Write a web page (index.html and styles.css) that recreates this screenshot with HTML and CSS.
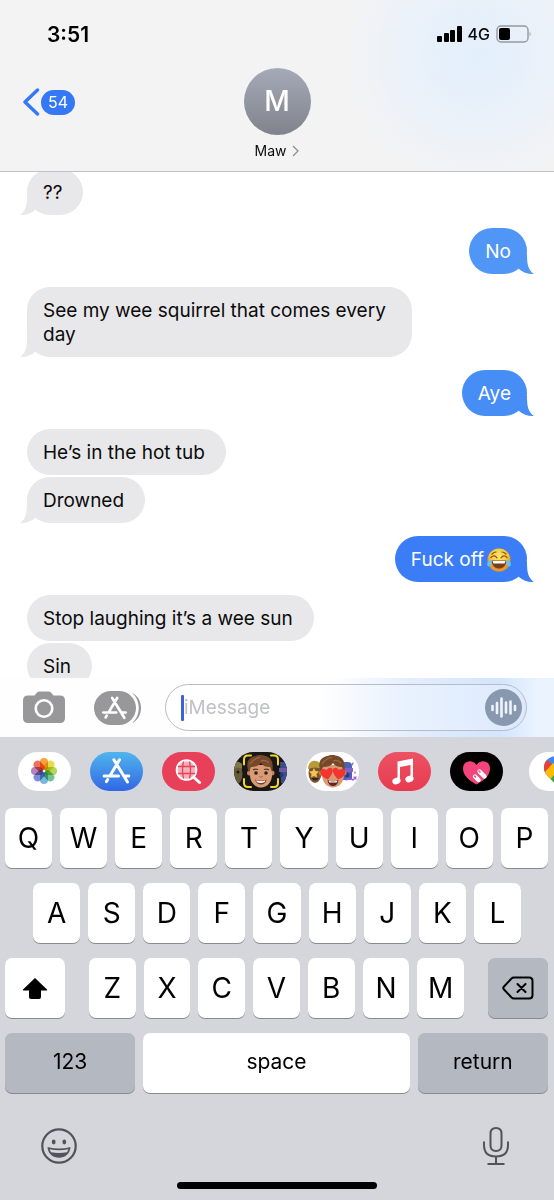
FILE: index.html
```html
<!doctype html>
<html lang="en">
<head>
<meta charset="utf-8">
<meta name="viewport" content="width=device-width, initial-scale=1">
<title>Maw</title>
<link rel="stylesheet" href="styles.css">
</head>
<body>

<!-- shared shapes -->

<svg class="defs" aria-hidden="true">
	<symbol id="store" viewBox="0 0 28 26">
		<path d="M17 1.8 7.6 17.6M5.2 21.6 4 23.6M11.4 1.8 25 24M1.5 18H16M21.4 18h5.1" fill="none" stroke="currentColor" stroke-width="3" stroke-linecap="round"/>
	</symbol>
</svg>


<!-- status bar and contact -->

<header>
	<div class="status">
		<span class="clock">3:51</span>
		<div class="signal">
			<svg width="25" height="16" viewBox="0 0 25 16" aria-label="Signal">
				<rect x="0" y="10" width="5" height="6" rx="1"/>
				<rect x="7" y="7" width="5" height="9" rx="1"/>
				<rect x="13" y="4" width="5" height="12" rx="1"/>
				<rect x="20" y="0" width="5" height="16" rx="1"/>
			</svg>
			<span>4G</span>
			<svg width="36" height="18" viewBox="0 0 36 18" aria-label="Battery">
				<rect x="1" y="1" width="31" height="16" rx="4" fill="none" stroke="#96999d" stroke-width="1.4"/>
				<rect x="3" y="3" width="11" height="12" rx="2"/>
				<path d="M33.600 6.500q2 2.500 0 5z" fill="#96999d"/>
			</svg>
		</div>
	</div>
	<div class="contact">
		<a class="back" href="#" aria-label="Back, 54 unread">
			<svg width="18" height="28" viewBox="0 0 18 28"><path d="M15.500 2 3 14l12.500 12" fill="none" stroke="currentColor" stroke-width="3.400" stroke-linecap="round" stroke-linejoin="round"/></svg>
			<span class="badge">54</span>
		</a>
		<a class="person" href="#">
			<span class="avatar">M</span>
			<span class="name">Maw
				<svg width="7" height="12" viewBox="0 0 7 12"><path d="m1 1 5 5-5 5" fill="none" stroke="#8a8a8e" stroke-width="1.200"/></svg>
			</span>
		</a>
	</div>
</header>


<!-- messages -->

<main>
	<div class="thread">
		<p class="bubble them last">??</p>
		<p class="bubble me last first-shade">No</p>
		<p class="bubble them last">See my wee squirrel that comes every day</p>
		<p class="bubble me last second-shade">Aye</p>
		<p class="bubble them">He’s in the hot tub</p>
		<p class="bubble them last">Drowned</p>
		<p class="bubble me last">Fuck off<svg class="emoji" viewBox="0 0 24 24" role="img" aria-label="😂">
			<defs><radialGradient id="joy" cy=".35"><stop offset="0" stop-color="#ffe768"/><stop offset=".7" stop-color="#fccb3c"/><stop offset="1" stop-color="#e69a2c"/></radialGradient></defs>
			<circle cx="12" cy="12" r="11.500" fill="url(#joy)"/>
			<path d="M4 9.500Q7 6 10 9.800M14 9.800Q17 6 20 9.500M5 6q2-2 4-2M15 4q2 0 4 2" fill="none" stroke="#8b531f" stroke-width="1.200" stroke-linecap="round"/>
			<path d="M4.500 12.500h15C19 18 16 20.500 12 20.500S5 18 4.500 12.500z" fill="#7c3b1d"/>
			<path d="M5.500 13h13l-1 2.600H6.500z" fill="#fff"/>
			<path d="M5 11.500C1.500 12.500-.5 15 .3 17.200c.8 1.800 3 1.600 3.700-.2.500-1.500.5-3.500 1-5.500zM19 11.500c3.500 1 5.500 3.500 4.700 5.700-.8 1.800-3 1.600-3.700-.2-.5-1.500-.5-3.500-1-5.500z" fill="#62c3f3"/>
		</svg></p>
		<p class="bubble them">Stop laughing it’s a wee sun</p>
		<p class="bubble them">Sin</p>
	</div>
</main>


<!-- message box -->

<form class="composer">
	<button type="button" class="camera" aria-label="Camera">
		<svg width="42" height="33" viewBox="0 0 42 33">
			<path d="M5 4.500h6.500L14 1.500Q15 .5 16.500.5h9q1.500 0 2.500 1l2.500 3H37q5 0 5 5V27q0 5-5 5H5q-5 0-5-5V9.500q0-5 5-5z" fill="#98989a"/>
			<circle cx="21" cy="17.500" r="8.300" fill="none" stroke="#fff" stroke-width="2.600"/>
		</svg>
	</button>
	<button type="button" class="apps" aria-label="Apps">
		<svg width="47" height="34" viewBox="0 0 47 34">
			<rect width="42" height="34" rx="17" fill="#98989a"/>
			<path d="M36 1.500C47 5 47 29 36 32.500" fill="none" stroke="#fff" stroke-width="2"/>
			<path d="M38 2C50 7 50 27 38 32 47 25 47 9 38 2z" fill="#98989a"/>
			<use href="#store" x="8" y="5" width="25" height="24" color="#fff"/>
		</svg>
	</button>
	<div class="field">
		<span class="caret"></span>
		<input type="text" placeholder="iMessage" aria-label="iMessage">
		<button type="button" class="audio" aria-label="Record audio">
			<svg width="37" height="37" viewBox="0 0 37 37">
				<circle cx="18.500" cy="18.500" r="18.500" fill="#8798af"/>
				<path d="M7.500 17v4M12 14v10M16.500 9.500v18M21 13.500v10M25.500 12.500v12M30 17v4" fill="none" stroke="#edf4fd" stroke-width="2.600" stroke-linecap="round"/>
			</svg>
		</button>
	</div>
</form>


<!-- keyboard -->

<section class="keyboard">
	<nav class="drawer">
		<button class="pill" aria-label="Photos">
			<svg viewBox="0 0 53 39">
				<g class="petals" transform="translate(26 19)">
					<rect x="-4" y="-13" width="8" height="12" rx="4" fill="#f8a23a"/>
					<rect x="-4" y="-13" width="8" height="12" rx="4" fill="#e8dc44" transform="rotate(45)"/>
					<rect x="-4" y="-13" width="8" height="12" rx="4" fill="#b6d35a" transform="rotate(90)"/>
					<rect x="-4" y="-13" width="8" height="12" rx="4" fill="#71c195" transform="rotate(135)"/>
					<rect x="-4" y="-13" width="8" height="12" rx="4" fill="#79b9dc" transform="rotate(180)"/>
					<rect x="-4" y="-13" width="8" height="12" rx="4" fill="#7b8fce" transform="rotate(225)"/>
					<rect x="-4" y="-13" width="8" height="12" rx="4" fill="#b783bd" transform="rotate(270)"/>
					<rect x="-4" y="-13" width="8" height="12" rx="4" fill="#ee705b" transform="rotate(315)"/>
				</g>
			</svg>
		</button>
		<button class="pill store" aria-label="App Store">
			<svg viewBox="0 0 53 39"><use href="#store" x="12.500" y="6" width="28" height="26"/></svg>
		</button>
		<button class="pill search" aria-label="Images">
			<svg viewBox="0 0 53 39">
				<circle cx="24.500" cy="18" r="9.800" fill="#f7b0ba" stroke="#fff" stroke-width="2"/>
				<path d="M21.500 9.500q-2 8.500 0 17M27.500 9.500q2 8.500 0 17M16 14.500h17M16 21.500h17" fill="none" stroke="#e94059" stroke-width="1.300"/>
				<path d="m32 25.500 5.500 5" stroke="#fff" stroke-width="3" stroke-linecap="round"/>
			</svg>
		</button>
		<button class="pill dark" aria-label="Memoji">
			<svg viewBox="0 0 53 39">
				<ellipse cx="3" cy="22" rx="5.500" ry="10" fill="#665a38"/>
				<path d="M0 17q4-3 8 0v-5q-4-4-8-1z" fill="#82764a"/>
				<circle cx="4" cy="20" r="1.500" fill="#201c15"/>
				<path d="M46 10h7v21h-6z" fill="#3d4c8e"/>
				<path d="M45 16h8v4h-8z" fill="#6c57a0"/>
				<circle cx="47.500" cy="23" r="2" fill="#223870"/>
				<g id="face">
					<circle cx="15.500" cy="21" r="2.500" fill="#c9825c"/>
					<circle cx="38" cy="21" r="2.500" fill="#c9825c"/>
					<path d="M16 13h22v10c0 7-5 12.500-11 12.500S16 30 16 23z" fill="#d99b74"/>
					<path d="M15 20C11.500 13 13 5 22 4c3-2 14-1 16 6 1 3 1 7 0 10l-2-5c-4 0-7-1-9-4-2 3-6 4-10 4z" fill="#75482b"/>
					<path d="M16 12q4-6 10-6.500m1 3.500q4-2 8 2" fill="none" stroke="#a36a42" stroke-width="1.200"/>
				</g>
				<path d="M19 18q2-1.500 5-.5M30 17.500q3-1 5 .5" fill="none" stroke="#5d341f" stroke-width="1.200"/>
				<circle cx="22" cy="21" r="1.800" fill="#2e2019"/><circle cx="32" cy="21" r="1.800" fill="#2e2019"/>
				<path d="M25.500 24.500q1.500 1.500 3 0" fill="none" stroke="#a66144"/>
				<path d="M21 27.500q6 2.500 11.500 0-1 5-5.500 5t-6-5z" fill="#7c332a"/>
				<path d="M22 28.200q5 2 9.500 0l-1 2q-4 1.500-7.500 0z" fill="#fff"/>
				<path d="M17 3.500h-3q-4 0-4 4v5M37 3.500h3q4 0 4 4v5M10 27v4q0 4 4 4h3M44 27v4q0 4-4 4h-3" fill="none" stroke="#f5d52d" stroke-width="2" stroke-linecap="round"/>
			</svg>
		</button>
		<button class="pill" aria-label="Memoji stickers">
			<svg viewBox="0 0 53 39">
				<ellipse cx="9" cy="21" rx="6.500" ry="10" fill="#79572e"/>
				<path d="M2 17c0-11 13-11 14 0q-7-3-14 0z" fill="#b99b35"/>
				<path d="m8 16 1.500 3 3.500.5-2.500 2.500.5 3.500-3-1.500-3 1.500.5-3.500L3 19.500l3.500-.5z" fill="#f3c34a"/>
				<path d="M5 26h8q-4 5-8 0z" fill="#39221a"/>
				<path d="M35 14q0-4 4-4h3q4 0 4 4v14H36z" fill="#4d62b5"/>
				<path d="M35 16h12v4H35z" fill="#8362c8"/>
				<circle cx="41" cy="23" r="2.500" fill="#283d88"/>
				<path d="M40 28q5-2 7 0l3-3M46 13l1-2M49 20v1M48 25l2 2" fill="none" stroke="#9d5ce0" stroke-width="1.300" stroke-linecap="round"/>
				<use href="#face"/>
				<path d="M21.500 28q5.500 2.500 11 0-1 6-5.500 6t-5.500-6z" fill="#65251f"/>
				<path d="M22.500 28.800q4.500 1.500 9 0l-1 1.800h-7z" fill="#fff"/>
				<path d="M22 27.500C10 23 14 14 20.500 18c4-5 11-1 1.500 9.500z" fill="#f23531"/>
				<path d="M32 27.500C22 17 29 13 33 18c6-4 11 5-1 9.500z" fill="#f23531"/>
			</svg>
		</button>
		<button class="pill music" aria-label="Music">
			<svg viewBox="0 0 53 39">
				<path d="m19.500 9.500 15.500-3v6l-13 2.500v14h-2.500z" fill="#fff"/>
				<path d="M32.500 10H35v17h-2.500z" fill="#fff"/>
				<ellipse cx="18.500" cy="29" rx="4.200" ry="3.200" fill="#fff" transform="rotate(-20 18.500 29)"/>
				<ellipse cx="31.500" cy="27" rx="4.200" ry="3.200" fill="#fff" transform="rotate(-20 31.500 27)"/>
			</svg>
		</button>
		<button class="pill black" aria-label="Digital Touch">
			<svg viewBox="0 0 53 39">
				<path d="M26.500 32.500C20 29 13 24 13 16.500 13 8 23 7 26.500 13 30 7 40 8 40 16.500 40 24 33 29 26.500 32.500z" fill="#f2447d"/>
				<path d="m25 24.500 3.500 3.500M29.500 19.500l5 5" stroke="#fff" stroke-width="4.400" stroke-linecap="round"/>
				<path d="m24.500 24 1 1M29 19l1 1" stroke="#f2447d" stroke-width="1.500" stroke-linecap="round"/>
			</svg>
		</button>
		<span class="divider"></span>
		<button class="pill" aria-label="Google Maps">
			<svg viewBox="0 0 53 39">
				<clipPath id="pin"><path d="M28 4c-8 0-13 5-13 12 0 8 9 11 13 19 4-8 13-11 13-19 0-7-5-12-13-12z"/></clipPath>
				<g clip-path="url(#pin)">
					<path d="M15 4h26v31H15z" fill="#4285f4"/>
					<path d="m14 10 4-2 6 5-8 9h-3z" fill="#e94235"/>
					<path d="m15 21 9-10 9 9-10 12z" fill="#fbbc04"/>
					<path d="m20 29 14-17h8v13L28 36z" fill="#34a853"/>
				</g>
			</svg>
		</button>
	</nav>

	<div class="keys">
		<div class="row">
			<button>Q</button>
			<button>W</button>
			<button>E</button>
			<button>R</button>
			<button>T</button>
			<button>Y</button>
			<button>U</button>
			<button>I</button>
			<button>O</button>
			<button>P</button>
		</div>
		<div class="row inset">
			<button>A</button>
			<button>S</button>
			<button>D</button>
			<button>F</button>
			<button>G</button>
			<button>H</button>
			<button>J</button>
			<button>K</button>
			<button>L</button>
		</div>
		<div class="row outer">
			<button class="side" aria-label="Shift">
				<svg width="26" height="23" viewBox="0 0 26 23"><path d="M13 1 25 12.500q.5 1-.5 1H19V20q0 2-2 2H9q-2 0-2-2v-6.500H1.500q-1 0-.5-1z"/></svg>
			</button>
			<div class="row letters">
				<button>Z</button>
				<button>X</button>
				<button>C</button>
				<button>V</button>
				<button>B</button>
				<button>N</button>
				<button>M</button>
			</div>
			<button class="side grey" aria-label="Delete">
				<svg width="32" height="24" viewBox="0 0 32 24"><path d="M12 1.500h15q3.500 0 3.500 3.500v14q0 3.500-3.500 3.500H12q-1.500 0-2.500-1L2 13.500q-1.500-1.500 0-3l7.500-8q1-1 2.500-1zM15.500 8l8 8M23.500 8l-8 8" fill="none" stroke="#000" stroke-width="2" stroke-linecap="round" stroke-linejoin="round"/></svg>
			</button>
		</div>
		<div class="row words">
			<button class="grey">123</button>
			<button class="space">space</button>
			<button class="grey">return</button>
		</div>
	</div>

	<div class="tools">
		<button aria-label="Emoji">
			<svg width="36" height="36" viewBox="0 0 36 36">
				<circle cx="18" cy="18" r="16.700" fill="none" stroke="#50535a" stroke-width="2.200"/>
				<ellipse cx="12.700" cy="14" rx="1.900" ry="2.400" fill="#50535a"/>
				<ellipse cx="23.300" cy="14" rx="1.900" ry="2.400" fill="#50535a"/>
				<path d="M6.500 19q11.500 3 23 0C29 26 24 29.800 18 29.800S7 26 6.500 19z" fill="#50535a"/>
				<path d="M8.500 21.200q9.500 2 19 0l-1.500 3q-8 1.600-16 0z" fill="#d6d7dd"/>
			</svg>
		</button>
		<button aria-label="Dictate">
			<svg width="26" height="38" viewBox="0 0 26 38"><path d="M13 1q5.500 0 5.500 5.500v12q0 5.500-5.500 5.500t-5.500-5.500v-12Q7.500 1 13 1zM1 14.500V18q0 11.500 12 11.500T25 18v-3.500M13 29.500V37M4.500 37h17" fill="none" stroke="#50535a" stroke-width="2"/></svg>
		</button>
	</div>
	<div class="home"></div>
</section>

</body>
</html>
```
FILE: styles.css
```css
/* ====  Base  ==== */

* {
	box-sizing: border-box;
}

html, body {
	height: 100%;
	margin: 0;
}

body {
	display: flex;
	flex-direction: column;
	overflow: hidden;
	font-family: Inter, "Liberation Sans", sans-serif;
	color: #0b0b0c;
	background: white;
}

button {
	display: flex;
	align-items: center;
	justify-content: center;
	padding: 0;
	border: 0;
	background: none;
	font: inherit;
	color: black;
}

a {
	color: inherit;
	text-decoration: none;
}

svg {
	display: block;
	flex: none;
}

.defs {
	position: absolute;
	width: 0;
	height: 0;
}


/* ====  Header  ==== */

header {
	flex: none;
	z-index: 1;
	border-bottom: 1px solid #c0c0c3;
	background: radial-gradient(circle at 86% 32%, #e2effc 0, #e9f1fa 60px, #f3f3f4 130px);
}

.status {
	display: flex;
	justify-content: space-between;
	align-items: center;
	height: 68px;
	padding: 0 22px 0 47px;
}

.clock {
	font-size: 21px;
	font-weight: 600;
	color: black;
}

.signal {
	display: flex;
	align-items: center;
	gap: 6px;
	font-size: 16px;
	font-weight: 500;
}

.contact {
	display: grid;
	grid-template-columns: 1fr auto 1fr;
	align-items: start;
	padding: 0 22px 10px;
}

.back {
	display: flex;
	align-items: center;
	height: 68px;
	gap: 1px;
	color: #3578f6;
}

.badge {
	padding: 0 7px;
	border-radius: 13px;
	background: #3578f6;
	color: white;
	font-size: 16px;
	line-height: 25px;
}

.person {
	display: flex;
	flex-direction: column;
	align-items: center;
	gap: 5px;
}

.avatar {
	width: 67px;
	height: 67px;
	border-radius: 50%;
	background: linear-gradient(#a5aab7, #80838c);
	color: white;
	font-size: 28px;
	font-weight: 500;
	line-height: 67px;
	text-align: center;
}

.name {
	display: flex;
	align-items: center;
	gap: 6px;
	font-size: 14px;
	line-height: 21px;
}


/* ====  Messages  ==== */

main {
	flex: 1;
	min-height: 0;
	overflow: hidden;
}

.thread {
	display: flex;
	flex-direction: column;
	align-items: flex-start;
	gap: 2px;
	margin-top: -3px; /* scrolled a little under the header */
	padding: 0 27px;
}

.bubble {
	position: relative;
	max-width: 385px;
	margin: 0;
	padding: 12px 16px 10px;
	border-radius: 23px;
	font-size: 19px;
	line-height: 24px;
}

.last {
	margin-bottom: 11px;
}

.them {
	padding-right: 21px;
	background: #e8e8ea;
}

.me {
	align-self: flex-end;
	background: #3a7df6;
	color: white;
}

.first-shade {
	background: #5096f6;
}

.second-shade {
	background: #468df6;
}

/* little tail on the last bubble of a group */
.last::before {
	content: "";
	position: absolute;
	left: -7px;
	bottom: 0;
	width: 20px;
	height: 20px;
	background: inherit;
	clip-path: path("M7 0C7 10 6 16 0 20Q9 20.500 15 15L20 10V0Z");
}

.me.last::before {
	left: auto;
	right: -7px;
	transform: scaleX(-1);
}

.emoji {
	display: inline-block;
	width: 24px;
	height: 24px;
	margin-left: 3px;
	vertical-align: top;
}


/* ====  Message box  ==== */

.composer {
	display: flex;
	flex: none;
	align-items: center;
	height: 59px;
	padding: 0 27px 0 23px;
	background: linear-gradient(90deg, #fefefe 60%, #e3eefd 74%, #d3e4fd 90%, #eaf3ff 97%);
}

.apps {
	margin: 0 24px 0 29px;
}

.field {
	display: flex;
	flex: 1;
	align-items: center;
	min-width: 0;
	height: 47px;
	padding: 0 4px 0 15px;
	border: 1px solid #b9bcc4;
	border-radius: 24px;
	background: linear-gradient(90deg, white 42%, #e9f2fe 65%, #dce9fd);
}

.caret {
	width: 3px;
	height: 26px;
	border-radius: 1px;
	background: #3c61dd;
}

.field input {
	flex: 1;
	min-width: 0;
	padding: 0;
	border: 0;
	outline: 0;
	background: none;
	font: inherit;
	font-size: 19px;
}

.field input::placeholder {
	color: #c0c1c6;
}


/* ====  Keyboard  ==== */

.keyboard {
	flex: none;
	background: #d5d6dc;
}

.drawer {
	display: flex;
	gap: 19px;
	padding: 15px 0 17px 18px;
	overflow: hidden;
}

.pill {
	flex: none;
	width: 53px;
	height: 39px;
	border-radius: 20px;
	overflow: hidden;
	background: white;
}

.pill svg {
	width: 53px;
	height: 39px;
}

.petals rect {
	mix-blend-mode: multiply;
}

.store {
	background: linear-gradient(#50b5ee, #3267e4);
	color: white;
}

.search {
	background: #e94059;
}

.dark {
	background: #171716;
}

.music {
	background: linear-gradient(#ed5264, #e63b4e);
}

.black {
	background: black;
}

.divider {
	width: 1px;
	height: 35px;
	margin: 2px -6px;
	background: #b4b6bd;
}

.keys {
	display: grid;
	gap: 15px;
	padding: 0 6px 0 5px;
}

.row {
	display: flex;
	gap: 8px;
}

.row button {
	flex: 1;
	min-width: 0;
	height: 60px;
	border-radius: 7px;
	background: white;
	box-shadow: 0 1px 0 #898a8d;
	font-size: 28px;
}

.inset {
	padding: 0 27px 0 28px;
}

.outer {
	gap: 24px;
}

.outer .side {
	flex: none;
	width: 60px;
}

.letters {
	flex: 1;
}

.row .grey {
	background: #b3b8c1;
}

.row.words button {
	padding-bottom: 4px;
	font-size: 21px;
}

.words .grey {
	flex: 0 0 24%;
}

.tools {
	display: flex;
	justify-content: space-between;
	align-items: center;
	padding: 34px 45px 0 41px;
}

.home {
	width: 36%;
	height: 7px;
	margin: 17px auto 11px;
	border-radius: 4px;
	background: black;
}
```
